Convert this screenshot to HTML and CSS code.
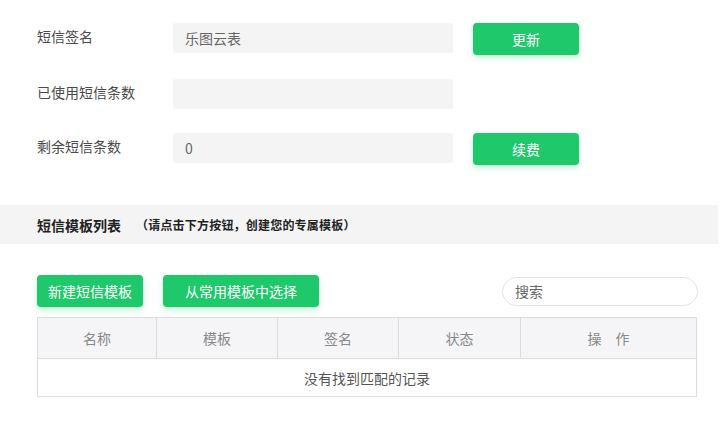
FILE: index.html
```html
<!DOCTYPE html>
<html lang="zh-CN">
<head>
    <meta charset="UTF-8">
    <meta name="viewport" content="width=device-width, initial-scale=1.0">
    <title>短信设置</title>
    <link rel="stylesheet" href="styles.css">
</head>
<body>
    <section class="sms-info">
        <div class="form-row">
            <label class="form-label">短信签名</label>
            <input class="form-input" type="text" value="乐图云表">
            <button class="btn btn-side">更新</button>
        </div>
        <div class="form-row">
            <label class="form-label">已使用短信条数</label>
            <input class="form-input" type="text" value="">
        </div>
        <div class="form-row">
            <label class="form-label">剩余短信条数</label>
            <input class="form-input" type="text" value="0">
            <button class="btn btn-side">续费</button>
        </div>
    </section>

    <div class="band">
        <span class="band-title">短信模板列表</span>
        <span class="band-tip">（请点击下方按钮，创建您的专属模板）</span>
    </div>

    <section class="templates">
        <div class="toolbar">
            <button class="btn btn-new">新建短信模板</button>
            <button class="btn btn-pick">从常用模板中选择</button>
            <input class="search" type="text" placeholder="搜索">
        </div>

        <table class="tpl-table">
            <thead>
                <tr>
                    <th class="col-name">名称</th>
                    <th class="col-tpl">模板</th>
                    <th class="col-sign">签名</th>
                    <th class="col-state">状态</th>
                    <th class="col-ops">操&emsp;作</th>
                </tr>
            </thead>
            <tbody>
                <tr>
                    <td colspan="5" class="empty">没有找到匹配的记录</td>
                </tr>
            </tbody>
        </table>
    </section>
</body>
</html>
```

FILE: styles.css
```css
/* Global */
body {
    margin: 0;
    padding: 0;
    width: 718px;
    background-color: #fff;
    font-family: "Noto Sans CJK SC", "Microsoft YaHei", sans-serif;
    font-size: 14px;
    color: #555;
}

/* Buttons */
.btn {
    height: 32px;
    border: none;
    border-radius: 4px;
    background-color: #1fc86a;
    color: #fff;
    font-family: inherit;
    font-size: 14px;
    cursor: pointer;
    box-shadow: 0 3px 6px rgba(31, 200, 106, 0.25);
    padding: 0;
}

/* SMS info form */
.sms-info {
    padding: 23px 0 0 37px;
}

.form-row {
    display: flex;
    align-items: flex-start;
    margin-bottom: 24px;
}

.form-row:last-child {
    margin-bottom: 0;
}

.form-label {
    width: 136px;
    margin-top: 3px;
    line-height: 20px;
    color: #4a4a4a;
}

.form-input {
    box-sizing: border-box;
    width: 280px;
    height: 30px;
    border: none;
    border-radius: 2px;
    background-color: #f4f4f4;
    padding: 0 12px;
    font-family: inherit;
    font-size: 14px;
    color: #666;
    outline: none;
}

.btn-side {
    width: 106px;
    margin-left: 20px;
}

/* Section band */
.band {
    margin-top: 40px;
    height: 39px;
    background-color: #f4f4f5;
    display: flex;
    align-items: center;
    padding-left: 37px;
    font-weight: bold;
    color: #222;
}

.band-title {
    font-size: 14px;
}

.band-tip {
    font-size: 12px;
    margin-left: 15px;
    letter-spacing: 0.2px;
}

/* Templates */
.templates {
    padding: 31px 20px 0 37px;
}

.toolbar {
    display: flex;
    align-items: center;
    gap: 20px;
    margin-bottom: 10px;
}

.btn-new {
    width: 106px;
}

.btn-pick {
    width: 156px;
}

.search {
    box-sizing: border-box;
    margin-left: auto;
    width: 196px;
    height: 29px;
    border: 1px solid #e3e3e3;
    border-radius: 15px;
    padding: 0 12px;
    font-family: inherit;
    font-size: 14px;
    outline: none;
}

.search::placeholder {
    color: #666;
}

/* Table */
.tpl-table {
    width: 660px;
    border-collapse: collapse;
    border: 1px solid #dcdcdc;
    table-layout: fixed;
}

.tpl-table th {
    height: 40px;
    background-color: #f5f5f7;
    border-right: 1px solid #dcdcdc;
    border-bottom: 1px solid #dcdcdc;
    font-weight: normal;
    color: #888;
    padding: 0;
}

.tpl-table th:last-child {
    border-right: none;
}

.col-name { width: 118px; }
.col-tpl { width: 120px; }
.col-sign { width: 120px; }
.col-state { width: 121px; }

.empty {
    height: 37px;
    text-align: center;
    color: #555;
    padding: 0;
}
```
